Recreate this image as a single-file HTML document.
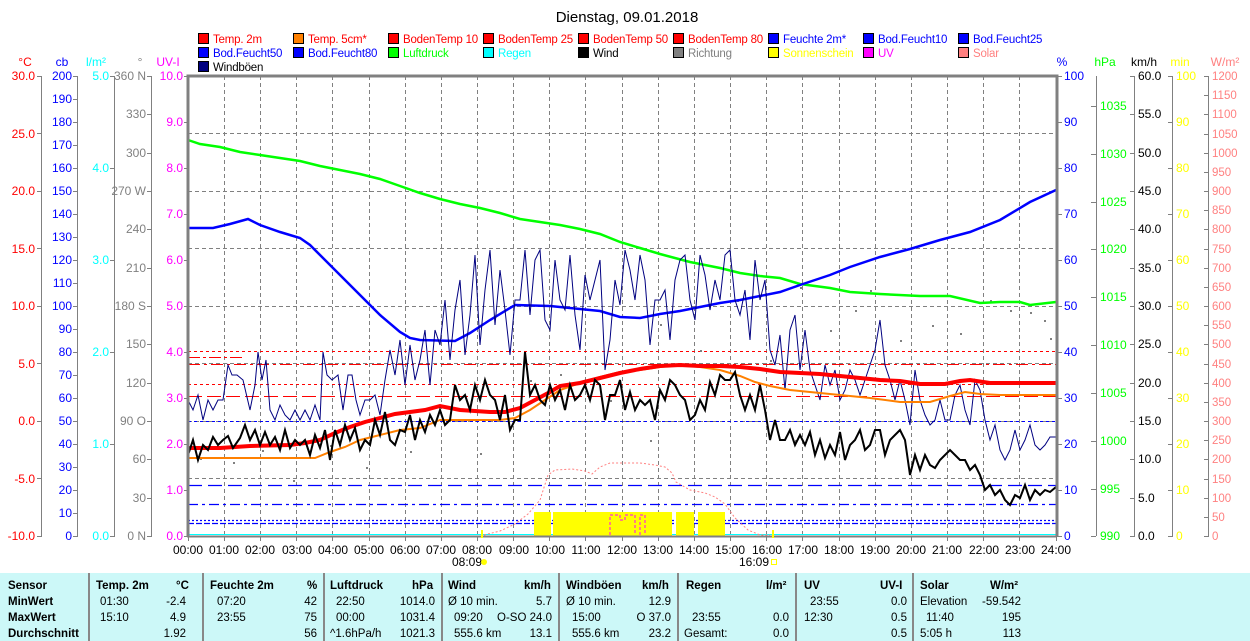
<!DOCTYPE html>
<html><head><meta charset="utf-8"><style>
body{margin:0;background:#fff;width:1250px;height:641px;overflow:hidden;font-family:"Liberation Sans",sans-serif}
svg text{font-family:"Liberation Sans",sans-serif}
#tbl{position:absolute;left:0;top:573px;width:1250px;height:68px;background:#ccf8f8;font-size:11.5px;color:#000}
#tbl span{position:absolute;white-space:nowrap}
#tbl .b{font-weight:bold}
#tbl .sep{position:absolute;top:0;width:2px;height:68px;background:#888}
</style></head><body>
<svg width="1250" height="573" style="position:absolute;left:0;top:0" font-size="12">
<text x="627" y="22" text-anchor="middle" font-size="15">Dienstag, 09.01.2018</text>
<!-- legend -->
<g stroke="#000" stroke-width="1">
<rect x="198.5" y="33.5" width="10" height="10" fill="#f00"/><rect x="293.5" y="33.5" width="10" height="10" fill="#ff8000"/><rect x="388.5" y="33.5" width="10" height="10" fill="#f00"/><rect x="483.5" y="33.5" width="10" height="10" fill="#f00"/><rect x="578.5" y="33.5" width="10" height="10" fill="#f00"/><rect x="673.5" y="33.5" width="10" height="10" fill="#f00"/><rect x="768.5" y="33.5" width="10" height="10" fill="#00f"/><rect x="863.5" y="33.5" width="10" height="10" fill="#00f"/><rect x="958.5" y="33.5" width="10" height="10" fill="#00f"/>
<rect x="198.5" y="47.5" width="10" height="10" fill="#00f"/><rect x="293.5" y="47.5" width="10" height="10" fill="#00f"/><rect x="388.5" y="47.5" width="10" height="10" fill="#0f0"/><rect x="483.5" y="47.5" width="10" height="10" fill="#0ff"/><rect x="578.5" y="47.5" width="10" height="10" fill="#000"/><rect x="673.5" y="47.5" width="10" height="10" fill="#808080"/><rect x="768.5" y="47.5" width="10" height="10" fill="#ff0"/><rect x="863.5" y="47.5" width="10" height="10" fill="#f0f"/><rect x="958.5" y="47.5" width="10" height="10" fill="#ff8080"/>
<rect x="198.5" y="61.5" width="10" height="10" fill="#000080"/>
</g>
<g font-size="11.5" letter-spacing="-0.2">
<text x="213" y="43" fill="#f00">Temp. 2m</text><text x="308" y="43" fill="#f00">Temp. 5cm*</text><text x="403" y="43" fill="#f00">BodenTemp 10</text><text x="498" y="43" fill="#f00">BodenTemp 25</text><text x="593" y="43" fill="#f00">BodenTemp 50</text><text x="688" y="43" fill="#f00">BodenTemp 80</text><text x="783" y="43" fill="#00f">Feuchte 2m*</text><text x="878" y="43" fill="#00f">Bod.Feucht10</text><text x="973" y="43" fill="#00f">Bod.Feucht25</text>
<text x="213" y="57" fill="#00f">Bod.Feucht50</text><text x="308" y="57" fill="#00f">Bod.Feucht80</text><text x="403" y="57" fill="#0f0">Luftdruck</text><text x="498" y="57" fill="#0ff">Regen</text><text x="593" y="57" fill="#000">Wind</text><text x="688" y="57" fill="#808080">Richtung</text><text x="783" y="57" fill="#ff0">Sonnenschein</text><text x="878" y="57" fill="#f0f">UV</text><text x="973" y="57" fill="#ff8080">Solar</text>
<text x="213" y="71" fill="#000">Windböen</text>
</g>
<!-- axis headers -->
<text x="25" y="66" fill="#f00" text-anchor="middle">°C</text>
<text x="62" y="66" fill="#00f" text-anchor="middle">cb</text>
<text x="96" y="66" fill="#0ff" text-anchor="middle">l/m²</text>
<text x="140" y="66" fill="#808080" text-anchor="middle">°</text>
<text x="168" y="66" fill="#f0f" text-anchor="middle">UV-I</text>
<text x="1062" y="66" fill="#00f" text-anchor="middle">%</text>
<text x="1105" y="66" fill="#0f0" text-anchor="middle">hPa</text>
<text x="1144" y="66" fill="#000" text-anchor="middle">km/h</text>
<text x="1180" y="66" fill="#ff0" text-anchor="middle">min</text>
<text x="1225" y="66" fill="#ff8080" text-anchor="middle">W/m²</text>
<!-- left axis lines -->
<g stroke="#808080" stroke-width="1">
<line x1="41.5" y1="76" x2="41.5" y2="536"/><line x1="77.5" y1="76" x2="77.5" y2="536"/><line x1="114.5" y1="76" x2="114.5" y2="536"/><line x1="151.5" y1="76" x2="151.5" y2="536"/>
<line x1="1096.5" y1="76" x2="1096.5" y2="536"/><line x1="1134.5" y1="76" x2="1134.5" y2="536"/><line x1="1172.5" y1="76" x2="1172.5" y2="536"/><line x1="1208.5" y1="76" x2="1208.5" y2="536"/>
</g>
<!-- °C -->
<g fill="#f00" text-anchor="end"><text x="35" y="80">30.0</text><text x="35" y="138">25.0</text><text x="35" y="195">20.0</text><text x="35" y="253">15.0</text><text x="35" y="310">10.0</text><text x="35" y="368">5.0</text><text x="35" y="425">0.0</text><text x="35" y="483">-5.0</text><text x="35" y="540">-10.0</text></g>
<g stroke="#808080"><path d="M37 76.5h5M37 133.5h5M37 191.5h5M37 248.5h5M37 306.5h5M37 363.5h5M37 421.5h5M37 478.5h5M37 536.5h5"/></g>
<!-- cb -->
<g fill="#00f" text-anchor="end">
<text x="72" y="80">200</text><text x="72" y="103">190</text><text x="72" y="126">180</text><text x="72" y="149">170</text><text x="72" y="172">160</text><text x="72" y="195">150</text><text x="72" y="218">140</text><text x="72" y="241">130</text><text x="72" y="264">120</text><text x="72" y="287">110</text><text x="72" y="310">100</text><text x="72" y="333">90</text><text x="72" y="356">80</text><text x="72" y="379">70</text><text x="72" y="402">60</text><text x="72" y="425">50</text><text x="72" y="448">40</text><text x="72" y="471">30</text><text x="72" y="494">20</text><text x="72" y="517">10</text><text x="72" y="540">0</text></g>
<path stroke="#808080" d="M73 76.5h5M73 99.5h5M73 122.5h5M73 145.5h5M73 168.5h5M73 191.5h5M73 214.5h5M73 237.5h5M73 260.5h5M73 283.5h5M73 306.5h5M73 329.5h5M73 352.5h5M73 375.5h5M73 398.5h5M73 421.5h5M73 444.5h5M73 467.5h5M73 490.5h5M73 513.5h5M73 536.5h5"/>
<!-- l/m2 -->
<g fill="#0ff" text-anchor="end"><text x="109" y="80">5.0</text><text x="109" y="172">4.0</text><text x="109" y="264">3.0</text><text x="109" y="356">2.0</text><text x="109" y="448">1.0</text><text x="109" y="540">0.0</text></g>
<path stroke="#808080" d="M110 76.5h5M110 168.5h5M110 260.5h5M110 352.5h5M110 444.5h5M110 536.5h5"/>
<!-- deg -->
<g fill="#808080" text-anchor="end"><text x="146" y="80">360 N</text><text x="146" y="118">330</text><text x="146" y="157">300</text><text x="146" y="195">270 W</text><text x="146" y="233">240</text><text x="146" y="272">210</text><text x="146" y="310">180 S</text><text x="146" y="348">150</text><text x="146" y="387">120</text><text x="146" y="425">90 O</text><text x="146" y="463">60</text><text x="146" y="502">30</text><text x="146" y="540">0 N</text></g>
<path stroke="#808080" d="M147 76.5h5M147 114.5h5M147 153.5h5M147 191.5h5M147 229.5h5M147 268.5h5M147 306.5h5M147 344.5h5M147 383.5h5M147 421.5h5M147 459.5h5M147 498.5h5M147 536.5h5"/>
<!-- UV -->
<g fill="#f0f" text-anchor="end"><text x="183" y="80">10.0</text><text x="183" y="126">9.0</text><text x="183" y="172">8.0</text><text x="183" y="218">7.0</text><text x="183" y="264">6.0</text><text x="183" y="310">5.0</text><text x="183" y="356">4.0</text><text x="183" y="402">3.0</text><text x="183" y="448">2.0</text><text x="183" y="494">1.0</text><text x="183" y="540">0.0</text></g>
<path stroke="#808080" d="M184 76.5h4M184 122.5h4M184 168.5h4M184 214.5h4M184 260.5h4M184 306.5h4M184 352.5h4M184 398.5h4M184 444.5h4M184 490.5h4M184 536.5h4"/>
<!-- right % -->
<g fill="#00f"><text x="1064" y="80">100</text><text x="1064" y="126">90</text><text x="1064" y="172">80</text><text x="1064" y="218">70</text><text x="1064" y="264">60</text><text x="1064" y="310">50</text><text x="1064" y="356">40</text><text x="1064" y="402">30</text><text x="1064" y="448">20</text><text x="1064" y="494">10</text><text x="1064" y="540">0</text></g>
<path stroke="#808080" d="M1057 76.5h5M1057 122.5h5M1057 168.5h5M1057 214.5h5M1057 260.5h5M1057 306.5h5M1057 352.5h5M1057 398.5h5M1057 444.5h5M1057 490.5h5M1057 536.5h5"/>
<!-- hPa -->
<g fill="#0f0"><text x="1100" y="110">1035</text><text x="1100" y="158">1030</text><text x="1100" y="206">1025</text><text x="1100" y="253">1020</text><text x="1100" y="301">1015</text><text x="1100" y="349">1010</text><text x="1100" y="397">1005</text><text x="1100" y="445">1000</text><text x="1100" y="493">995</text><text x="1100" y="540">990</text></g>
<path stroke="#808080" d="M1091 106.5h5M1091 154.5h5M1091 202.5h5M1091 249.5h5M1091 297.5h5M1091 345.5h5M1091 393.5h5M1091 441.5h5M1091 489.5h5M1091 536.5h5"/>
<!-- km/h -->
<g fill="#000"><text x="1138" y="80">60.0</text><text x="1138" y="118">55.0</text><text x="1138" y="157">50.0</text><text x="1138" y="195">45.0</text><text x="1138" y="233">40.0</text><text x="1138" y="272">35.0</text><text x="1138" y="310">30.0</text><text x="1138" y="348">25.0</text><text x="1138" y="387">20.0</text><text x="1138" y="425">15.0</text><text x="1138" y="463">10.0</text><text x="1138" y="502">5.0</text><text x="1138" y="540">0.0</text></g>
<path stroke="#808080" d="M1130 76.5h5M1130 114.5h5M1130 153.5h5M1130 191.5h5M1130 229.5h5M1130 268.5h5M1130 306.5h5M1130 344.5h5M1130 383.5h5M1130 421.5h5M1130 459.5h5M1130 498.5h5M1130 536.5h5"/>
<!-- min -->
<g fill="#ff0"><text x="1176" y="80">100</text><text x="1176" y="126">90</text><text x="1176" y="172">80</text><text x="1176" y="218">70</text><text x="1176" y="264">60</text><text x="1176" y="310">50</text><text x="1176" y="356">40</text><text x="1176" y="402">30</text><text x="1176" y="448">20</text><text x="1176" y="494">10</text><text x="1176" y="540">0</text></g>
<path stroke="#808080" d="M1168 76.5h5M1168 122.5h5M1168 168.5h5M1168 214.5h5M1168 260.5h5M1168 306.5h5M1168 352.5h5M1168 398.5h5M1168 444.5h5M1168 490.5h5M1168 536.5h5"/>
<!-- W/m2 -->
<g fill="#ff8080" font-size="11.5">
<text x="1212" y="80">1200</text><text x="1212" y="99">1150</text><text x="1212" y="118">1100</text><text x="1212" y="138">1050</text><text x="1212" y="157">1000</text><text x="1212" y="176">950</text><text x="1212" y="195">900</text><text x="1212" y="214">850</text><text x="1212" y="233">800</text><text x="1212" y="253">750</text><text x="1212" y="272">700</text><text x="1212" y="291">650</text><text x="1212" y="310">600</text><text x="1212" y="329">550</text><text x="1212" y="348">500</text><text x="1212" y="368">450</text><text x="1212" y="387">400</text><text x="1212" y="406">350</text><text x="1212" y="425">300</text><text x="1212" y="444">250</text><text x="1212" y="463">200</text><text x="1212" y="483">150</text><text x="1212" y="502">100</text><text x="1212" y="521">50</text><text x="1212" y="540">0</text></g>
<path stroke="#808080" d="M1204 76.5h5M1204 95.5h5M1204 114.5h5M1204 134.5h5M1204 153.5h5M1204 172.5h5M1204 191.5h5M1204 210.5h5M1204 229.5h5M1204 249.5h5M1204 268.5h5M1204 287.5h5M1204 306.5h5M1204 325.5h5M1204 344.5h5M1204 364.5h5M1204 383.5h5M1204 402.5h5M1204 421.5h5M1204 440.5h5M1204 459.5h5M1204 479.5h5M1204 498.5h5M1204 517.5h5M1204 536.5h5"/>

<!-- grid -->
<g stroke="#808080" stroke-dasharray="4,3" stroke-width="1">
<path d="M188 133.5H1056M188 191.5H1056M188 248.5H1056M188 306.5H1056M188 363.5H1056M188 421.5H1056M188 478.5H1056"/>
<path d="M224.5 76V536M260.5 76V536M296.5 76V536M332.5 76V536M369.5 76V536M405.5 76V536M441.5 76V536M477.5 76V536M513.5 76V536M549.5 76V536M585.5 76V536M622.5 76V536M658.5 76V536M694.5 76V536M730.5 76V536M766.5 76V536M802.5 76V536M839.5 76V536M875.5 76V536M911.5 76V536M947.5 76V536M983.5 76V536M1019.5 76V536"/>
</g>
<!-- reference lines -->
<g stroke="#f00" stroke-width="1">
<path d="M188 351.5H1056" stroke-dasharray="3,3"/>
<path d="M188 357.5H245" stroke-dasharray="12,3,3,3"/>
<path d="M188 364.5H1056" stroke-dasharray="12,4,3,4"/>
<path d="M188 384.5H1056" stroke-dasharray="3,3"/>
<path d="M188 396.5H1056" stroke-dasharray="14,5"/>
</g>
<g stroke="#00f" stroke-width="1.3">
<path d="M188 421.5H1056" stroke-dasharray="3,3" stroke-width="1"/>
<path d="M188 485.5H1056" stroke-dasharray="14,6"/>
<path d="M188 504.5H1056" stroke-dasharray="10,4,3,4"/>
<path d="M188 520.5H1056" stroke-dasharray="2,2"/>
<path d="M188 523.5H1056" stroke-dasharray="6,2"/>
</g>
<path d="M188 534.5H1056" stroke="#0ff" stroke-width="1"/>
<!-- sunshine -->
<g fill="#ff0"><rect x="534" y="512" width="17" height="24"/><rect x="553" y="512" width="119" height="24"/><rect x="676" y="512" width="18" height="24"/><rect x="698" y="512" width="27" height="24"/></g>
<path d="M610 535V515h10v5h5v-5h10v20M640 535V515h5v20" fill="none" stroke="#f0f" stroke-dasharray="3,2"/>
<!-- solar -->
<polyline fill="none" stroke="#ff8080" stroke-dasharray="2,2" points="484,535 500,531 515,524 528,514 540,500 548,475 555,470 572,469 585,471 592,474 600,467 610,463 625,463 640,463 655,465 665,467 672,473 676,482 690,490 705,493 715,497 725,504 735,518 748,530 760,535 770,535"/>
<!-- direction dots -->
<g fill="#808080"><rect x="200" y="458" width="2" height="2"/><rect x="233" y="462" width="2" height="2"/><rect x="262" y="450" width="2" height="2"/><rect x="293" y="480" width="2" height="2"/><rect x="330" y="445" width="2" height="2"/><rect x="366" y="467" width="2" height="2"/><rect x="410" y="451" width="2" height="2"/><rect x="480" y="453" width="2" height="2"/><rect x="530" y="380" width="2" height="2"/><rect x="560" y="374" width="2" height="2"/><rect x="610" y="400" width="2" height="2"/><rect x="650" y="440" width="2" height="2"/><rect x="660" y="324" width="2" height="2"/><rect x="700" y="350" width="2" height="2"/><rect x="737" y="300" width="2" height="2"/><rect x="800" y="287" width="2" height="2"/><rect x="830" y="330" width="2" height="2"/><rect x="855" y="310" width="2" height="2"/><rect x="870" y="290" width="2" height="2"/><rect x="900" y="340" width="2" height="2"/><rect x="932" y="325" width="2" height="2"/><rect x="960" y="333" width="2" height="2"/><rect x="990" y="300" width="2" height="2"/><rect x="1010" y="310" width="2" height="2"/><rect x="1030" y="312" width="2" height="2"/><rect x="1044" y="320" width="2" height="2"/><rect x="1050" y="338" width="2" height="2"/><rect x="795" y="440" width="2" height="2"/><rect x="770" y="360" width="2" height="2"/></g>
<!-- pressure -->
<polyline fill="none" stroke="#0f0" stroke-width="2.5" points="188,140 200,144 220,147 240,152 260,155 280,158 300,161 320,166 340,170 360,174 380,179 400,186 420,193 440,199 460,204 480,208 500,213 520,219 540,222 560,225 580,229 600,234 620,242 640,248 660,254 690,262 720,268 740,273 760,276 780,278 800,284 830,288 850,292 880,294 920,296 950,296 980,303 1000,302 1020,302 1030,305 1056,302"/>
<!-- humidity -->
<polyline fill="none" stroke="#00f" stroke-width="2.5" points="188,228 213,228 230,224 248,219 260,225 280,232 300,238 310,245 320,255 335,270 350,285 365,300 380,315 400,332 410,338 420,340 455,341 470,333 490,320 515,305 550,306 580,309 600,311 620,317 640,318 660,314 680,311 700,307 720,303 740,300 760,296 780,292 800,285 830,275 850,267 880,257 910,249 940,240 970,232 1000,220 1030,202 1056,190"/>
<!-- gusts -->
<polyline fill="none" stroke="#000080" stroke-width="1" points="188,400 193,410 198,395 203,420 208,400 213,410 218,400 223,400 228,365 232,375 237,375 243,380 250,410 255,385 258,352 262,380 266,360 270,410 275,420 280,405 285,415 290,420 295,410 300,420 305,410 310,420 315,405 320,420 323,352 327,375 332,380 338,375 343,410 348,375 352,375 356,400 360,415 365,400 370,400 375,395 380,415 385,380 390,350 395,375 400,340 405,385 410,345 415,380 420,360 425,330 430,385 435,330 440,345 445,300 450,360 455,310 460,280 465,355 470,315 475,255 480,345 485,290 490,250 495,325 500,270 505,310 510,355 515,300 520,300 525,250 530,315 535,260 540,250 545,320 550,330 555,260 560,300 565,310 570,255 575,315 580,350 585,275 590,300 595,280 600,260 605,370 610,340 615,280 620,305 625,250 630,270 635,300 640,255 645,280 650,345 655,300 660,300 665,290 670,340 675,280 680,260 685,255 690,300 695,320 700,255 705,275 710,310 715,280 720,300 725,255 730,250 735,300 740,315 745,290 750,340 755,260 760,300 765,280 770,350 775,365 780,335 785,390 790,330 795,315 800,370 805,330 810,370 815,385 820,400 825,365 830,385 835,370 840,400 845,390 850,370 855,380 860,395 865,380 870,365 875,350 880,320 885,365 890,380 895,400 900,380 905,400 910,425 915,370 920,400 925,415 930,425 935,420 940,400 945,420 950,420 955,395 960,385 965,410 970,425 975,380 980,390 985,420 990,440 995,425 1000,450 1005,460 1010,450 1015,430 1020,450 1025,440 1030,425 1035,445 1040,450 1045,445 1050,437 1056,437"/>
<!-- soil temp 5cm -->
<polyline fill="none" stroke="#ff8000" stroke-width="2" points="188,458 270,458 315,458 330,452 345,447 360,440 380,435 400,430 420,428 440,420 470,420 500,420 515,418 530,410 545,400 560,390 580,383 600,377 620,372 640,370 660,367 680,365 700,367 720,370 740,376 755,382 770,386 790,390 820,393 850,396 870,398 900,402 930,402 950,396 965,392 980,394 1000,395 1020,395 1056,395"/>
<!-- temp 2m -->
<polyline fill="none" stroke="#f00" stroke-width="4" points="188,448 220,448 250,446 290,445 305,443 320,440 335,433 350,427 365,422 380,418 395,414 410,412 425,410 440,406 460,410 475,411 490,412 505,412 520,408 535,400 550,392 560,386 580,383 600,378 620,373 640,369 660,366 680,365 700,366 720,366 740,367 760,369 780,372 800,373 820,374 840,376 860,378 880,380 900,381 920,384 945,384 960,381 970,380 990,383 1056,383"/>
<!-- wind -->
<polyline fill="none" stroke="#000" stroke-width="2" points="188,455 193,440 198,460 203,445 208,450 213,437 218,445 223,440 228,436 233,448 240,438 245,425 250,440 255,430 260,445 265,432 270,445 275,437 280,450 285,430 290,448 295,440 300,445 305,440 310,455 315,435 320,448 325,430 330,460 335,430 340,445 345,425 350,440 355,428 360,450 365,440 370,445 375,420 380,435 385,412 390,440 395,445 400,430 405,432 410,415 415,440 420,420 425,432 430,415 435,425 440,410 445,425 450,420 455,385 460,400 465,395 470,410 475,385 480,400 485,380 490,395 495,400 500,420 505,395 510,430 515,420 520,420 525,352 530,395 535,385 540,400 545,405 550,385 555,400 560,390 565,410 570,385 575,400 580,395 585,385 590,400 595,380 600,385 605,420 610,395 615,395 620,380 625,410 630,392 635,410 640,400 645,405 650,400 655,420 660,390 665,400 670,380 675,385 680,395 685,400 690,420 695,415 700,400 705,410 710,382 715,395 720,375 725,380 730,380 735,372 740,395 745,410 750,395 755,410 760,385 765,410 770,440 775,420 780,440 785,440 790,430 795,445 800,435 805,445 810,432 815,455 820,440 825,458 830,445 835,455 840,432 845,460 850,445 855,440 860,430 865,450 870,445 875,430 880,430 885,455 890,440 895,435 900,430 905,440 910,475 915,455 920,470 925,455 930,465 935,468 940,460 945,455 950,450 955,455 960,460 965,460 970,470 975,465 980,475 985,490 990,485 995,495 1000,490 1005,500 1010,505 1015,495 1020,498 1025,485 1030,500 1035,490 1040,495 1045,490 1050,492 1056,487"/>
<!-- plot border -->
<path d="M188 537V76H1057V537" fill="none" stroke="#808080" stroke-width="3"/>
<path d="M187 536.5H1057" stroke="#808080" stroke-width="2"/>
<!-- time ticks -->
<path stroke="#808080" d="M188.5 537v4M224.5 537v4M260.5 537v4M296.5 537v4M332.5 537v4M369.5 537v4M405.5 537v4M441.5 537v4M477.5 537v4M513.5 537v4M549.5 537v4M585.5 537v4M622.5 537v4M658.5 537v4M694.5 537v4M730.5 537v4M766.5 537v4M802.5 537v4M839.5 537v4M875.5 537v4M911.5 537v4M947.5 537v4M983.5 537v4M1019.5 537v4M1056.5 537v4"/>
<g text-anchor="middle" font-size="12"><text x="188" y="554">00:00</text><text x="224" y="554">01:00</text><text x="260" y="554">02:00</text><text x="297" y="554">03:00</text><text x="333" y="554">04:00</text><text x="369" y="554">05:00</text><text x="405" y="554">06:00</text><text x="441" y="554">07:00</text><text x="477" y="554">08:00</text><text x="514" y="554">09:00</text><text x="550" y="554">10:00</text><text x="586" y="554">11:00</text><text x="622" y="554">12:00</text><text x="658" y="554">13:00</text><text x="694" y="554">14:00</text><text x="730" y="554">15:00</text><text x="767" y="554">16:00</text><text x="803" y="554">17:00</text><text x="839" y="554">18:00</text><text x="875" y="554">19:00</text><text x="911" y="554">20:00</text><text x="947" y="554">21:00</text><text x="984" y="554">22:00</text><text x="1020" y="554">23:00</text><text x="1056" y="554">24:00</text></g>
<text x="467" y="566" text-anchor="middle">08:09</text><circle cx="484" cy="562" r="3" fill="#ff0"/>
<text x="754" y="566" text-anchor="middle">16:09</text><rect x="771.5" y="559.5" width="5" height="5" fill="none" stroke="#ff0"/>
<rect x="481" y="530" width="2" height="8" fill="#ff0"/><rect x="772" y="530" width="2" height="8" fill="#ff0"/>
</svg>
<div id="tbl">
<div class="sep" style="left:88px"></div><div class="sep" style="left:202px"></div><div class="sep" style="left:323px"></div><div class="sep" style="left:441px"></div><div class="sep" style="left:558px"></div><div class="sep" style="left:677px"></div><div class="sep" style="left:795px"></div><div class="sep" style="left:912px"></div>
<span class="b" style="left:8px;top:7px">Sensor</span><span class="b" style="left:8px;top:23px">MinWert</span><span class="b" style="left:8px;top:39px">MaxWert</span><span class="b" style="left:8px;top:55px">Durchschnitt</span>
<span class="b" style="left:96px;top:7px">Temp. 2m</span><span class="b" style="left:176px;top:7px">°C</span>
<span style="left:100px;top:23px">01:30</span><span style="right:1064px;top:23px">-2.4</span>
<span style="left:100px;top:39px">15:10</span><span style="right:1064px;top:39px">4.9</span>
<span style="right:1064px;top:55px">1.92</span>
<span class="b" style="left:210px;top:7px">Feuchte 2m</span><span class="b" style="left:307px;top:7px">%</span>
<span style="left:217px;top:23px">07:20</span><span style="right:933px;top:23px">42</span>
<span style="left:217px;top:39px">23:55</span><span style="right:933px;top:39px">75</span>
<span style="right:933px;top:55px">56</span>
<span class="b" style="left:330px;top:7px">Luftdruck</span><span class="b" style="left:412px;top:7px">hPa</span>
<span style="left:336px;top:23px">22:50</span><span style="right:815px;top:23px">1014.0</span>
<span style="left:336px;top:39px">00:00</span><span style="right:815px;top:39px">1031.4</span>
<span style="left:330px;top:55px">^1.6hPa/h</span><span style="right:815px;top:55px">1021.3</span>
<span class="b" style="left:448px;top:7px">Wind</span><span class="b" style="left:524px;top:7px">km/h</span>
<span style="left:448px;top:23px">Ø 10 min.</span><span style="right:698px;top:23px">5.7</span>
<span style="left:454px;top:39px">09:20</span><span style="right:698px;top:39px">O-SO 24.0</span>
<span style="left:454px;top:55px">555.6 km</span><span style="right:698px;top:55px">13.1</span>
<span class="b" style="left:566px;top:7px">Windböen</span><span class="b" style="left:642px;top:7px">km/h</span>
<span style="left:566px;top:23px">Ø 10 min.</span><span style="right:579px;top:23px">12.9</span>
<span style="left:572px;top:39px">15:00</span><span style="right:579px;top:39px">O 37.0</span>
<span style="left:572px;top:55px">555.6 km</span><span style="right:579px;top:55px">23.2</span>
<span class="b" style="left:686px;top:7px">Regen</span><span class="b" style="left:766px;top:7px">l/m²</span>
<span style="left:692px;top:39px">23:55</span><span style="right:461px;top:39px">0.0</span>
<span style="left:684px;top:55px">Gesamt:</span><span style="right:461px;top:55px">0.0</span>
<span class="b" style="left:804px;top:7px">UV</span><span class="b" style="left:880px;top:7px">UV-I</span>
<span style="left:810px;top:23px">23:55</span><span style="right:343px;top:23px">0.0</span>
<span style="left:804px;top:39px">12:30</span><span style="right:343px;top:39px">0.5</span>
<span style="right:343px;top:55px">0.5</span>
<span class="b" style="left:920px;top:7px">Solar</span><span class="b" style="left:990px;top:7px">W/m²</span>
<span style="left:920px;top:23px">Elevation</span><span style="right:229px;top:23px">-59.542</span>
<span style="left:926px;top:39px">11:40</span><span style="right:229px;top:39px">195</span>
<span style="left:920px;top:55px">5:05 h</span><span style="right:229px;top:55px">113</span>
</div>
</body></html>
